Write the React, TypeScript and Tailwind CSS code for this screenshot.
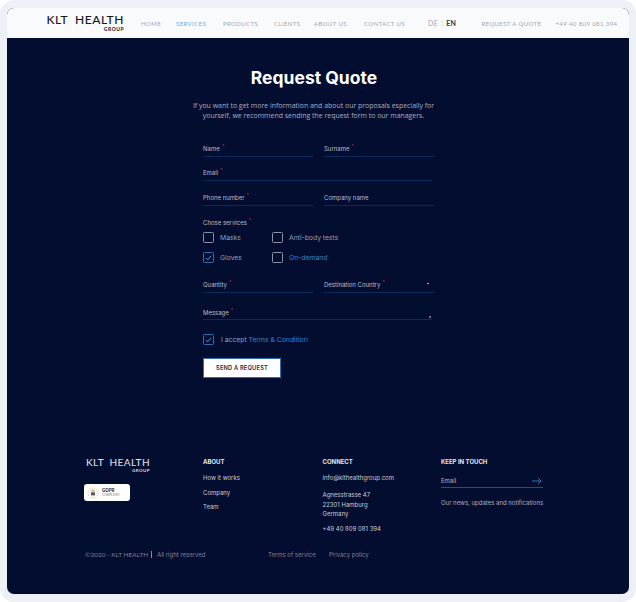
import React from "react";

const nav = [
  { t: "HOME", w: "w-[35px]" },
  { t: "SERVICES", w: "w-[47px]", a: true },
  { t: "PRODUCTS", w: "w-[51px]" },
  { t: "CLIENTS", w: "w-[40px]" },
  { t: "ABOUT US", w: "w-[50px]" },
  { t: "CONTACT US", w: "w-[64px]" },
];

function Req() {
  return <span className="relative top-[-3px] ml-[2px] text-[5px] leading-none text-[#c0203c]">*</span>;
}

function Field({ label, req, className, children }: { label: string; req?: boolean; className?: string; children?: React.ReactNode }) {
  return (
    <div className={`relative border-b border-[#0c2a5c] text-[6px] leading-[13px] text-[#b9bdcc] ${className ?? "h-[15px] w-[110px]"}`}>
      {label}
      {req && <Req />}
      {children}
    </div>
  );
}

function Check({ label, checked, blue, className }: { label: React.ReactNode; checked?: boolean; blue?: boolean; className?: string }) {
  return (
    <div className={`flex items-center ${className ?? ""}`}>
      <span className={`flex h-[11px] w-[11px] items-center justify-center rounded-[1.5px] border ${checked ? "border-[#2f6fb0]" : "border-[#8a90a6]"}`}>
        {checked && (
          <svg width="7" height="6" viewBox="0 0 7 6" fill="none">
            <path d="M1 3l1.700 1.800L6 1" stroke="#5da5e8" strokeWidth="0.9" />
          </svg>
        )}
      </span>
      <span className={`ml-[6px] pt-[1px] text-[6.800px] leading-none ${blue ? "text-[#3484cf]" : "text-[#9a9fb2]"}`}>{label}</span>
    </div>
  );
}

function Logo({ dark }: { dark?: boolean }) {
  return (
    <div className={`flex flex-col items-end font-['Lato',sans-serif] ${dark ? "w-[77px] text-[#15181f]" : "w-[65px] text-[#d9dce5]"}`}>
      <span className={`whitespace-nowrap font-medium ${dark ? "text-[12px] leading-[12px] tracking-[0.55px]" : "text-[10px] leading-[9px] tracking-[0.4px]"}`}>
        KLT&nbsp;&nbsp;HEALTH
      </span>
      <span className={`font-bold ${dark ? "text-[5px] leading-[7px] tracking-[0.5px]" : "text-[4.500px] leading-[7px] tracking-[0.4px]"}`}>GROUP</span>
    </div>
  );
}

export default function App() {
  return (
    <div className="h-[602px] w-[636px] bg-white font-['Inter',sans-serif]">
      <div className="h-[602px] rounded-[14px] bg-[#edf0f6] pb-[8px] pl-[7px] pr-[7px] pt-[8px]">
        <div className="flex h-full flex-col overflow-hidden rounded-[7px] bg-[#030d30]">
          <header className="flex h-[30px] shrink-0 items-center bg-[#f9fafc] pl-[40px] font-['Lato',sans-serif] text-[6px] tracking-[0.4px] text-[#a4a7b2]">
            <Logo dark />
            <nav className="ml-[17px] flex">
              {nav.map((n) => (
                <span key={n.t} className={`${n.w} ${n.a ? "text-[#63b3ee]" : ""}`}>
                  {n.t}
                </span>
              ))}
            </nav>
            <div className="flex items-center text-[7px]">
              <span>DE</span>
              <span className="mx-[3.500px] h-[7px] w-px bg-[#dcdfe6]" />
              <span className="font-bold text-[#33363f]">EN</span>
            </div>
            <span className="ml-[25px] w-[74px] whitespace-nowrap">REQUEST A QUOTE</span>
            <span className="whitespace-nowrap">+49 40 809 081 394</span>
          </header>

          <main className="flex flex-1 flex-col">
            <h1 className="mt-[30px] pr-[8px] text-center text-[17.500px] font-bold leading-[20px] text-white">Request Quote</h1>
            <p className="mt-[13px] pr-[9px] text-center font-['Open_Sans',sans-serif] text-[6.950px] leading-[10px] text-[#a9aec0]">
              If you want to get more information and about our proposals especially for
              <br />
              yourself, we recommend sending the request form to our managers.
            </p>

            <form className="ml-[196px] mt-[21px] w-[231px]">
              <div className="flex justify-between">
                <Field label="Name" req />
                <Field label="Surname" req />
              </div>
              <Field label="Email" req className="mt-[9px] h-[15px] w-[229px]" />
              <div className="mt-[10px] flex justify-between">
                <Field label="Phone number" req />
                <Field label="Company name" />
              </div>

              <div className="mt-[11px] text-[6px] leading-[11px] text-[#b9bdcc]">
                Chose services
                <Req />
              </div>
              <div className="mt-[4px] grid grid-cols-[69px_1fr] gap-y-[9px]">
                <Check label="Masks" />
                <Check label="Anti-body tests" />
                <Check label="Gloves" checked />
                <Check label="On-demand" blue />
              </div>

              <div className="mt-[15px] flex justify-between">
                <Field label="Quantity" req />
                <Field label="Destination Country" req>
                  <span className="absolute right-[5px] top-[5px] h-px w-[2px] bg-[#8fb4e0]" />
                </Field>
              </div>
              <Field label="Message" req className="mt-[13px] h-[14px] w-[229px]">
                <span className="absolute bottom-[1px] right-[1px] h-[2px] w-[2px] bg-[#4a78b0]" />
              </Field>

              <Check
                label={
                  <>
                    I accept <span className="text-[#3484cf]">Terms &amp; Condition</span>
                  </>
                }
                checked
                className="mt-[14px] [&>span:last-child]:ml-[7px]"
              />

              <button type="button" className="mt-[13px] block h-[20px] w-[78px] border border-[#2f6fb0] bg-white text-[5.700px] font-semibold tracking-[0.2px] text-[#252a3c]">
                SEND A REQUEST
              </button>
            </form>

            <footer className="ml-[78px] mt-[80px] grid w-[480px] grid-cols-[118px_119.500px_118.500px_1fr] text-[6px] text-[#c9ccd8]">
              <div>
                <Logo />
                <div className="ml-[-1px] mt-[10px] flex h-[17px] w-[46px] items-center rounded-[3px] bg-white pl-[3px] text-[#333]">
                  <svg width="12" height="12" viewBox="0 0 12 12" className="shrink-0">
                    <circle cx="6" cy="6" r="5" fill="none" stroke="#e8b27a" strokeWidth="1" strokeDasharray="1 1" />
                    <rect x="4" y="5.400" width="4" height="3" fill="#555" />
                    <path d="M4.800 5.400V4.400a1.200 1.200 0 0 1 2.400 0v1" fill="none" stroke="#555" strokeWidth="0.6" />
                  </svg>
                  <div className="ml-[3px] flex flex-col">
                    <span className="text-[4.500px] font-bold leading-[5px]">GDPR</span>
                    <span className="text-[3px] leading-[4px] text-[#777]">COMPLIANT</span>
                  </div>
                </div>
              </div>
              <div>
                <div className="text-[6px] font-bold leading-[8px] text-[#e4e6ee]">ABOUT</div>
                <ul className="mt-[8px] space-y-[6.500px] leading-[8px]">
                  <li>How it works</li>
                  <li>Company</li>
                  <li>Team</li>
                </ul>
              </div>
              <div>
                <div className="text-[6px] font-bold leading-[8px] text-[#e4e6ee]">CONNECT</div>
                <div className="mt-[8px] leading-[8px]">info@klthealthgroup.com</div>
                <div className="mt-[8px] leading-[9.500px]">
                  Agnesstrasse 47
                  <br />
                  22301 Hamburg
                  <br />
                  Germany
                </div>
                <div className="mt-[6px] leading-[8px]">+49 40 809 081 394</div>
              </div>
              <div>
                <div className="text-[6px] font-bold leading-[8px] text-[#e4e6ee]">KEEP IN TOUCH</div>
                <div className="mt-[8px] flex h-[14px] w-[102px] items-center justify-between border-b border-[#1f4f8f] pr-[1px] text-[#b5b9c9]">
                  Email
                  <svg width="10" height="8" viewBox="0 0 10 8" fill="none">
                    <path d="M0 4h9M6 1l3 3-3 3" stroke="#3a7cc0" strokeWidth="0.9" />
                  </svg>
                </div>
                <div className="mt-[11px] whitespace-nowrap leading-[8px] text-[#a9aec0]">Our news, updates and notifications</div>
              </div>
            </footer>

            <div className="ml-[78px] mt-[18px] flex items-center text-[6px] leading-[8px] text-[#7b8199]">
              <span className="w-[66px] whitespace-nowrap font-['Lato',sans-serif] text-[6.500px]">©2020 - KLT HEALTH</span>
              <span className="h-[7px] w-px bg-[#8a90a6]" />
              <span className="ml-[5px] w-[111px]">All right reserved</span>
              <span className="w-[61px]">Terms of service</span>
              <span>Privacy policy</span>
            </div>
          </main>
        </div>
      </div>
    </div>
  );
}
